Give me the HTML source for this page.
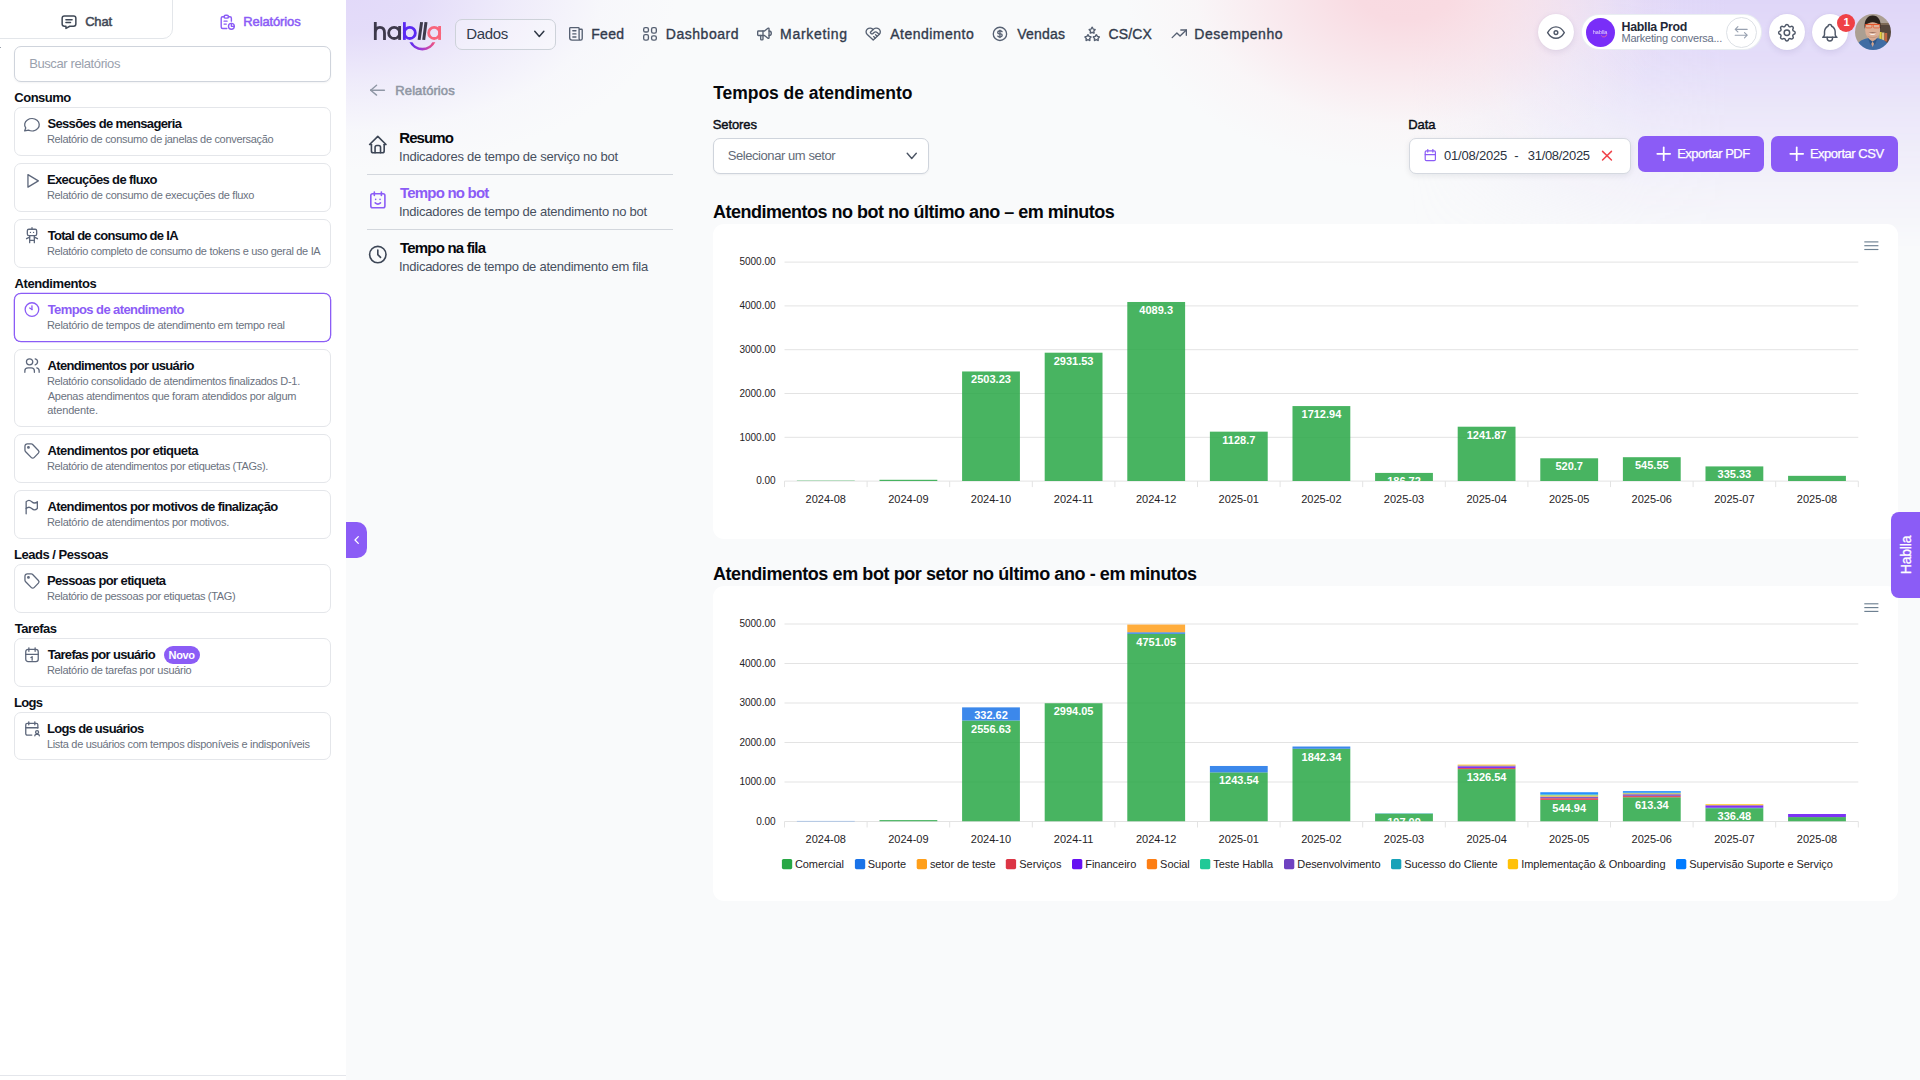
<!DOCTYPE html>
<html lang="pt-BR"><head><meta charset="utf-8"><title>Hablla - Tempos de atendimento</title>
<style>
*{box-sizing:border-box;margin:0;padding:0}
html,body{width:1920px;height:1080px;overflow:hidden}
body{font-family:"Liberation Sans",sans-serif;background:#f9fafb;position:relative;color:#111}
.b{position:absolute;display:block}
.t{position:absolute;white-space:nowrap;line-height:normal}
#bg{position:absolute;left:346px;top:0;width:1574px;height:1080px;overflow:hidden;background:#f9fafb}
#bg i{position:absolute;display:block;border-radius:50%}
#bg .l{left:-330px;top:-180px;width:660px;height:350px;background:radial-gradient(closest-side,rgba(226,217,249,1) 0%,rgba(227,219,249,.96) 22%,rgba(232,226,250,.6) 50%,rgba(240,237,252,.2) 78%,rgba(249,250,251,0) 100%)}
#bg .r{left:1064px;top:0;width:510px;height:250px;border-radius:0;background:linear-gradient(to right,rgba(223,214,248,0) 0%,rgba(223,214,248,.22) 14%,rgba(223,214,248,.62) 30%,rgba(223,214,248,.93) 46%,rgba(223,214,248,1) 62%);-webkit-mask-image:linear-gradient(to bottom,#000 0%,rgba(0,0,0,.8) 25%,rgba(0,0,0,.5) 46%,rgba(0,0,0,.2) 76%,transparent 100%);mask-image:linear-gradient(to bottom,#000 0%,rgba(0,0,0,.8) 25%,rgba(0,0,0,.5) 46%,rgba(0,0,0,.2) 76%,transparent 100%)}
#bg .p{left:779px;top:-190px;width:560px;height:360px;background:radial-gradient(closest-side,rgba(249,218,225,1) 0%,rgba(249,219,226,1) 17%,rgba(249,222,229,.64) 45%,rgba(250,230,235,.2) 75%,rgba(250,236,239,0) 100%)}
aside,header,nav,main{display:block;position:static}
#side{position:absolute;left:0;top:0;width:346px;height:1080px;background:#fff}
</style></head>
<body>
<div id="bg"><i class="l"></i><i class="r"></i><i class="p"></i></div>
<div id="side"></div>
<aside id="sidebar">
<div class="b " style="left:-1px;top:-1px;width:174px;height:40px;border:1px solid #e3e6ea;border-radius:0 0 10px 0;background:#fff"></div>
<svg class="b" style="left:59px;top:13px" width="20" height="19" fill="none" stroke="#3f4856" stroke-width="1.5" stroke-linecap="round" stroke-linejoin="round"><g transform="translate(0.87 0.01) scale(0.7611 0.7353)"><path d="M8 9h8" vector-effect="non-scaling-stroke"/><path d="M8 13h6" vector-effect="non-scaling-stroke"/><path d="M18 4a3 3 0 0 1 3 3v8a3 3 0 0 1 -3 3h-5l-5 3v-3h-2a3 3 0 0 1 -3 -3v-8a3 3 0 0 1 3 -3h12z" vector-effect="non-scaling-stroke"/></g></svg>
<div class="t " style="left:85.14px;top:13.80px;font-size:13px;color:#3f4856;letter-spacing:-0.168px;-webkit-text-stroke:0.5px #3f4856;">Chat</div>
<svg class="b" style="left:218px;top:12px" width="19" height="20" fill="none" stroke="#8b5cf6" stroke-width="1.4" stroke-linecap="round" stroke-linejoin="round"><g transform="translate(0.29 0.97) scale(0.7278 0.7421)"><path d="M8 5h-2a2 2 0 0 0 -2 2v12a2 2 0 0 0 2 2h5.697" vector-effect="non-scaling-stroke"/><path d="M18 14v4h4" vector-effect="non-scaling-stroke"/><path d="M18 11v-4a2 2 0 0 0 -2 -2h-2" vector-effect="non-scaling-stroke"/><path d="M8 5a2 2 0 0 1 2 -2h2a2 2 0 0 1 2 2v0a2 2 0 0 1 -2 2h-2a2 2 0 0 1 -2 -2z" vector-effect="non-scaling-stroke"/><path d="M14 18a4 4 0 1 0 8 0a4 4 0 1 0 -8 0" vector-effect="non-scaling-stroke"/><path d="M8 11h4" vector-effect="non-scaling-stroke"/><path d="M8 15h3" vector-effect="non-scaling-stroke"/></g></svg>
<div class="t " style="left:243.33px;top:13.80px;font-size:13px;color:#8b5cf6;letter-spacing:-0.132px;-webkit-text-stroke:0.5px #8b5cf6;">Relatórios</div>
<div class="b " style="left:14px;top:46px;width:317px;height:36px;border:1px solid #cfd4dc;border-radius:7px;background:#fff;box-shadow:0 1px 2px rgba(16,24,40,.05)"></div>
<div class="t " style="left:29.13px;top:55.60px;font-size:13px;color:#9aa1ad;letter-spacing:-0.388px;">Buscar relatórios</div>
<div class="t " style="left:14.27px;top:89.80px;font-size:13px;color:#0b0f17;font-weight:700;letter-spacing:-0.483px;">Consumo</div>
<div class="b " style="left:14px;top:107px;width:317px;height:49px;border:1px solid #e4e6ea;border-radius:7px;background:#fff"></div>
<svg class="b" style="left:22px;top:116px" width="20" height="18" fill="none" stroke="#5d677b" stroke-width="1.3" stroke-linecap="round" stroke-linejoin="round"><g transform="translate(0.22 -0.40) scale(0.8105 0.7677)"><path d="M3 20l1.3 -3.9c-2.324 -3.437 -1.426 -7.872 2.1 -10.374c3.526 -2.501 8.59 -2.296 11.845 .48c3.255 2.777 3.695 7.266 1.029 10.501c-2.666 3.235 -7.615 4.215 -11.574 2.293l-4.7 1" vector-effect="non-scaling-stroke"/></g></svg>
<div class="t " style="left:47.43px;top:116.00px;font-size:13px;color:#0b0f17;font-weight:700;letter-spacing:-0.646px;">Sessões de mensageria</div>
<div class="t " style="left:46.90px;top:133.00px;font-size:11px;color:#6b7280;letter-spacing:-0.315px;">Relatório de consumo de janelas de conversação</div>
<div class="b " style="left:14px;top:163px;width:317px;height:49px;border:1px solid #e4e6ea;border-radius:7px;background:#fff"></div>
<svg class="b" style="left:25px;top:172px" width="16" height="18" fill="none" stroke="#5d677b" stroke-width="1.3" stroke-linecap="round" stroke-linejoin="round"><g transform="translate(-2.65 -0.47) scale(0.8000 0.7813)"><path d="M7 4v16l13 -8z" vector-effect="non-scaling-stroke"/></g></svg>
<div class="t " style="left:46.93px;top:172.00px;font-size:13px;color:#0b0f17;font-weight:700;letter-spacing:-0.635px;">Execuções de fluxo</div>
<div class="t " style="left:46.90px;top:189.00px;font-size:11px;color:#6b7280;letter-spacing:-0.292px;">Relatório de consumo de execuções de fluxo</div>
<div class="b " style="left:14px;top:219px;width:317px;height:49px;border:1px solid #e4e6ea;border-radius:7px;background:#fff"></div>
<svg class="b" style="left:23px;top:225px" width="18" height="21" fill="none" stroke="#5d677b" stroke-width="1.3" stroke-linecap="round" stroke-linejoin="round"><g transform="translate(-0.34 1.07) scale(0.7786 0.7895)"><path d="M6 6a2 2 0 0 1 2 -2h8a2 2 0 0 1 2 2v4a2 2 0 0 1 -2 2h-8a2 2 0 0 1 -2 -2z" vector-effect="non-scaling-stroke"/><path d="M12 2v2" vector-effect="non-scaling-stroke"/><path d="M9 12v9" vector-effect="non-scaling-stroke"/><path d="M15 12v9" vector-effect="non-scaling-stroke"/><path d="M5 16l4 -2" vector-effect="non-scaling-stroke"/><path d="M15 14l4 2" vector-effect="non-scaling-stroke"/><path d="M9 18h6" vector-effect="non-scaling-stroke"/><path d="M10 8v.01" vector-effect="non-scaling-stroke"/><path d="M14 8v.01" vector-effect="non-scaling-stroke"/></g></svg>
<div class="t " style="left:47.65px;top:228.00px;font-size:13px;color:#0b0f17;font-weight:700;letter-spacing:-0.702px;">Total de consumo de IA</div>
<div class="t " style="left:46.90px;top:245.00px;font-size:11px;color:#6b7280;letter-spacing:-0.319px;">Relatório completo de consumo de tokens e uso geral de IA</div>
<div class="t " style="left:14.48px;top:276.00px;font-size:13px;color:#0b0f17;font-weight:700;letter-spacing:-0.401px;">Atendimentos</div>
<div class="b " style="left:14px;top:293px;width:317px;height:49px;border:1px solid #8b5cf6;border-radius:7px;background:#fff;box-shadow:0 0 0 .3px #8b5cf6"></div>
<svg class="b" style="left:22px;top:300px" width="20" height="19" fill="none" stroke="#8b5cf6" stroke-width="1.3" stroke-linecap="round" stroke-linejoin="round"><g transform="translate(0.88 0.49) scale(0.7556 0.7553)"><path d="M3 12a9 9 0 1 0 18 0a9 9 0 1 0 -18 0" vector-effect="non-scaling-stroke"/><path d="M12 12l-3 -2" vector-effect="non-scaling-stroke"/><path d="M12 7v5" vector-effect="non-scaling-stroke"/></g></svg>
<div class="t " style="left:47.65px;top:302.00px;font-size:13px;color:#8b5cf6;font-weight:700;letter-spacing:-0.583px;">Tempos de atendimento</div>
<div class="t " style="left:46.90px;top:319.00px;font-size:11px;color:#6b7280;letter-spacing:-0.269px;">Relatório de tempos de atendimento em tempo real</div>
<div class="b " style="left:14px;top:349px;width:317px;height:78px;border:1px solid #e4e6ea;border-radius:7px;background:#fff"></div>
<svg class="b" style="left:22px;top:356px" width="20" height="19" fill="none" stroke="#5d677b" stroke-width="1.3" stroke-linecap="round" stroke-linejoin="round"><g transform="translate(0.47 0.60) scale(0.7944 0.7500)"><path d="M5 7a4 4 0 1 0 8 0a4 4 0 1 0 -8 0" vector-effect="non-scaling-stroke"/><path d="M3 21v-2a4 4 0 0 1 4 -4h4a4 4 0 0 1 4 4v2" vector-effect="non-scaling-stroke"/><path d="M16 3.13a4 4 0 0 1 0 7.75" vector-effect="non-scaling-stroke"/><path d="M21 21v-2a4 4 0 0 0 -3 -3.85" vector-effect="non-scaling-stroke"/></g></svg>
<div class="t " style="left:47.48px;top:358.00px;font-size:13px;color:#0b0f17;font-weight:700;letter-spacing:-0.642px;">Atendimentos por usuário</div>
<div class="t " style="left:46.90px;top:375.00px;font-size:11px;color:#6b7280;letter-spacing:-0.297px;">Relatório consolidado de atendimentos finalizados D-1.</div>
<div class="t " style="left:47.78px;top:389.60px;font-size:11px;color:#6b7280;letter-spacing:-0.272px;">Apenas atendimentos que foram atendidos por algum</div>
<div class="t " style="left:47.33px;top:404.20px;font-size:11px;color:#6b7280;letter-spacing:-0.147px;">atendente.</div>
<div class="b " style="left:14px;top:434px;width:317px;height:49px;border:1px solid #e4e6ea;border-radius:7px;background:#fff"></div>
<svg class="b" style="left:22px;top:441px" width="20" height="20" fill="none" stroke="#5d677b" stroke-width="1.3" stroke-linecap="round" stroke-linejoin="round"><g transform="translate(0.62 0.47) scale(0.7777 0.7944)"><path d="M6.5 7.5a1 1 0 1 0 2 0a1 1 0 1 0 -2 0" vector-effect="non-scaling-stroke"/><path d="M3 6v5.172a2 2 0 0 0 .586 1.414l7.71 7.71a2.41 2.41 0 0 0 3.408 0l5.592 -5.592a2.41 2.41 0 0 0 0 -3.408l-7.71 -7.71a2 2 0 0 0 -1.414 -.586h-5.172a3 3 0 0 0 -3 3z" vector-effect="non-scaling-stroke"/></g></svg>
<div class="t " style="left:47.48px;top:443.00px;font-size:13px;color:#0b0f17;font-weight:700;letter-spacing:-0.572px;">Atendimentos por etiqueta</div>
<div class="t " style="left:46.90px;top:460.00px;font-size:11px;color:#6b7280;letter-spacing:-0.311px;">Relatório de atendimentos por etiquetas (TAGs).</div>
<div class="b " style="left:14px;top:490px;width:317px;height:49px;border:1px solid #e4e6ea;border-radius:7px;background:#fff"></div>
<svg class="b" style="left:23px;top:498px" width="17" height="19" fill="none" stroke="#5d677b" stroke-width="1.3" stroke-linecap="round" stroke-linejoin="round"><g transform="translate(-0.85 -0.05) scale(0.8000 0.7573)"><path d="M5 5a5 5 0 0 1 7 0a5 5 0 0 0 7 0v9a5 5 0 0 1 -7 0a5 5 0 0 0 -7 0v-9z" vector-effect="non-scaling-stroke"/><path d="M5 21v-7" vector-effect="non-scaling-stroke"/></g></svg>
<div class="t " style="left:47.48px;top:499.00px;font-size:13px;color:#0b0f17;font-weight:700;letter-spacing:-0.600px;">Atendimentos por motivos de finalização</div>
<div class="t " style="left:46.90px;top:516.00px;font-size:11px;color:#6b7280;letter-spacing:-0.245px;">Relatório de atendimentos por motivos.</div>
<div class="t " style="left:13.93px;top:547.30px;font-size:13px;color:#0b0f17;font-weight:700;letter-spacing:-0.469px;">Leads / Pessoas</div>
<div class="b " style="left:14px;top:564px;width:317px;height:49px;border:1px solid #e4e6ea;border-radius:7px;background:#fff"></div>
<svg class="b" style="left:22px;top:571px" width="20" height="20" fill="none" stroke="#5d677b" stroke-width="1.3" stroke-linecap="round" stroke-linejoin="round"><g transform="translate(0.62 0.47) scale(0.7777 0.7944)"><path d="M6.5 7.5a1 1 0 1 0 2 0a1 1 0 1 0 -2 0" vector-effect="non-scaling-stroke"/><path d="M3 6v5.172a2 2 0 0 0 .586 1.414l7.71 7.71a2.41 2.41 0 0 0 3.408 0l5.592 -5.592a2.41 2.41 0 0 0 0 -3.408l-7.71 -7.71a2 2 0 0 0 -1.414 -.586h-5.172a3 3 0 0 0 -3 3z" vector-effect="non-scaling-stroke"/></g></svg>
<div class="t " style="left:46.93px;top:573.00px;font-size:13px;color:#0b0f17;font-weight:700;letter-spacing:-0.610px;">Pessoas por etiqueta</div>
<div class="t " style="left:46.90px;top:590.00px;font-size:11px;color:#6b7280;letter-spacing:-0.346px;">Relatório de pessoas por etiquetas (TAG)</div>
<div class="t " style="left:14.65px;top:621.00px;font-size:13px;color:#0b0f17;font-weight:700;letter-spacing:-0.478px;">Tarefas</div>
<div class="b " style="left:14px;top:638px;width:317px;height:49px;border:1px solid #e4e6ea;border-radius:7px;background:#fff"></div>
<svg class="b" style="left:23px;top:645px" width="18" height="20" fill="none" stroke="#5d677b" stroke-width="1.3" stroke-linecap="round" stroke-linejoin="round"><g transform="translate(-0.38 0.57) scale(0.7812 0.7611)"><path d="M4 8a3 3 0 0 1 3 -3h10a3 3 0 0 1 3 3v10a3 3 0 0 1 -3 3h-10a3 3 0 0 1 -3 -3z" vector-effect="non-scaling-stroke"/><path d="M8 3v4.5" vector-effect="non-scaling-stroke"/><path d="M16 3v4.5" vector-effect="non-scaling-stroke"/><path d="M4 11.5h16" vector-effect="non-scaling-stroke"/><path d="M10.6 15.6l1.6 -1v4.6" vector-effect="non-scaling-stroke"/></g></svg>
<div class="t " style="left:47.65px;top:647.00px;font-size:13px;color:#0b0f17;font-weight:700;letter-spacing:-0.684px;">Tarefas por usuário</div>
<div class="t " style="left:46.90px;top:664.00px;font-size:11px;color:#6b7280;letter-spacing:-0.301px;">Relatório de tarefas por usuário</div>
<div class="b " style="left:164px;top:646.2px;width:36px;height:17.6px;background:#8b5cf6;border-radius:9px"></div>
<div class="t " style="left:168.56px;top:648.60px;font-size:11px;color:#fff;font-weight:700;letter-spacing:-0.345px;">Novo</div>
<div class="t " style="left:13.93px;top:695.00px;font-size:13px;color:#0b0f17;font-weight:700;letter-spacing:-0.650px;">Logs</div>
<div class="b " style="left:14px;top:712px;width:317px;height:48px;border:1px solid #e4e6ea;border-radius:7px;background:#fff"></div>
<svg class="b" style="left:23px;top:719px" width="19" height="20" fill="none" stroke="#5d677b" stroke-width="1.3" stroke-linecap="round" stroke-linejoin="round"><g transform="translate(-0.27 0.64) scale(0.7556 0.7368)"><path d="M12 21h-6a2 2 0 0 1 -2 -2v-12a2 2 0 0 1 2 -2h12a2 2 0 0 1 2 2v4.5" vector-effect="non-scaling-stroke"/><path d="M16 3v4" vector-effect="non-scaling-stroke"/><path d="M8 3v4" vector-effect="non-scaling-stroke"/><path d="M4 11h16" vector-effect="non-scaling-stroke"/><path d="M17 17a2 2 0 1 0 4 0a2 2 0 1 0 -4 0" vector-effect="non-scaling-stroke"/><path d="M22 22a2 2 0 0 0 -2 -2h-2a2 2 0 0 0 -2 2" vector-effect="non-scaling-stroke"/></g></svg>
<div class="t " style="left:46.93px;top:721.00px;font-size:13px;color:#0b0f17;font-weight:700;letter-spacing:-0.689px;">Logs de usuários</div>
<div class="t " style="left:46.90px;top:738.00px;font-size:11px;color:#6b7280;letter-spacing:-0.310px;">Lista de usuários com tempos disponíveis e indisponíveis</div>
<div class="b " style="left:0px;top:1075px;width:346px;height:1px;background:#e4e6eb"></div>
<div class="b " style="left:0px;top:47px;width:1px;height:1px;background:#989fac"></div>
</aside>
<div class="b " style="left:346px;top:522px;width:21px;height:36px;background:#8b5cf6;border-radius:0 10px 10px 0"></div>
<svg class="b" style="left:350px;top:533px" width="14" height="14" viewBox="0 0 14 14" fill="none" stroke="#fff" stroke-width="1.3" stroke-linecap="round" stroke-linejoin="round"><path d="M8.3 3.6L5 7l3.3 3.4"/></svg>
<header id="topbar">
<svg class="b" style="left:366px;top:12px" width="84" height="46" viewBox="366 12 84 46" fill="none" stroke-linecap="butt">
<defs><linearGradient id="lg" x1="410" y1="0" x2="435" y2="0" gradientUnits="userSpaceOnUse"><stop offset="0" stop-color="#5b2cf0"/><stop offset=".5" stop-color="#a53bd0"/><stop offset="1" stop-color="#f2557c"/></linearGradient></defs>
<g stroke="#3d394b" stroke-width="2.8">
<path d="M375.3 22.1V39.9M375.3 33C375.3 29 377.3 27.4 379.9 27.4C382.7 27.4 384.5 29.2 384.5 33V39.9"/>
<circle cx="394.2" cy="32.95" r="5.55"/><path d="M399.6 26V39.9"/>
<path d="M421.6 22.1L419.1 39.9M426 22.1L423.7 39.9" stroke-width="3"/>
</g>
<g stroke="#5a2af3" stroke-width="2.8"><path d="M404.4 22.1V39.9"/><circle cx="409.8" cy="32.95" r="5.55"/></g>
<g stroke="#f8657c" stroke-width="2.8"><circle cx="434.2" cy="32.95" r="5.55"/><path d="M439.6 26V39.9"/></g>
<clipPath id="smc"><rect x="400" y="42.2" width="50" height="12"/></clipPath><path d="M410.2 40.4A12.9 12.9 0 0 0 434.6 40.4" stroke="url(#lg)" stroke-width="2.7" clip-path="url(#smc)"/>
</svg>
<div class="b " style="left:455px;top:19px;width:101px;height:31px;border:1px solid #cdd2d9;border-radius:7px;background:rgba(255,255,255,.28)"></div>
<div class="t " style="left:466.27px;top:25.40px;font-size:15px;color:#313a4b;letter-spacing:-0.322px;">Dados</div>
<svg class="b" style="left:532px;top:28px" width="15" height="12" fill="none" stroke="#2f3745" stroke-width="1.5" stroke-linecap="round" stroke-linejoin="round"><g transform="translate(-1.80 -4.30) scale(0.7583 0.8500)"><path d="M6 9l6 6l6 -6" vector-effect="non-scaling-stroke"/></g></svg>
<svg class="b" style="left:567px;top:25px" width="18" height="18" fill="none" stroke="#566072" stroke-width="1.35" stroke-linecap="round" stroke-linejoin="round"><g transform="translate(-0.46 -0.44) scale(0.7844 0.7781)"><path d="M16 6h3a1 1 0 0 1 1 1v11a2 2 0 0 1 -4 0v-13a1 1 0 0 0 -1 -1h-10a1 1 0 0 0 -1 1v12a3 3 0 0 0 3 3h11" vector-effect="non-scaling-stroke"/><path d="M8 8l4 0" vector-effect="non-scaling-stroke"/><path d="M8 12l4 0" vector-effect="non-scaling-stroke"/><path d="M8 16l4 0" vector-effect="non-scaling-stroke"/></g></svg>
<div class="t " style="left:591.15px;top:25.80px;font-size:14px;color:#323b4c;letter-spacing:0.347px;-webkit-text-stroke:0.35px #323b4c;">Feed</div>
<svg class="b" style="left:641px;top:25px" width="18" height="18" fill="none" stroke="#566072" stroke-width="1.35" stroke-linecap="round" stroke-linejoin="round"><g transform="translate(-0.49 -0.44) scale(0.7906 0.7781)"><path d="M6 4h2a2 2 0 0 1 2 2v1.5a2 2 0 0 1 -2 2h-2a2 2 0 0 1 -2 -2v-1.5a2 2 0 0 1 2 -2z" vector-effect="non-scaling-stroke"/><path d="M6 13h2a2 2 0 0 1 2 2v3a2 2 0 0 1 -2 2h-2a2 2 0 0 1 -2 -2v-3a2 2 0 0 1 2 -2z" vector-effect="non-scaling-stroke"/><path d="M16 4h2a2 2 0 0 1 2 2v3a2 2 0 0 1 -2 2h-2a2 2 0 0 1 -2 -2v-3a2 2 0 0 1 2 -2z" vector-effect="non-scaling-stroke"/><path d="M16 14.5h2a2 2 0 0 1 2 2v1.5a2 2 0 0 1 -2 2h-2a2 2 0 0 1 -2 -2v-1.5a2 2 0 0 1 2 -2z" vector-effect="non-scaling-stroke"/></g></svg>
<div class="t " style="left:665.85px;top:25.80px;font-size:14px;color:#323b4c;letter-spacing:0.520px;-webkit-text-stroke:0.35px #323b4c;">Dashboard</div>
<svg class="b" style="left:755px;top:25px" width="19" height="18" fill="none" stroke="#566072" stroke-width="1.35" stroke-linecap="round" stroke-linejoin="round"><g transform="translate(0.40 0.09) scale(0.7583 0.7416)"><path d="M18 8a3 3 0 0 1 0 6" vector-effect="non-scaling-stroke"/><path d="M10 8v11a1 1 0 0 1 -1 1h-1a1 1 0 0 1 -1 -1v-5" vector-effect="non-scaling-stroke"/><path d="M12 8h0l4.524 -3.77a.9 .9 0 0 1 1.476 .692v12.156a.9 .9 0 0 1 -1.476 .692l-4.524 -3.77h-8a1 1 0 0 1 -1 -1v-4a1 1 0 0 1 1 -1h8" vector-effect="non-scaling-stroke"/></g></svg>
<div class="t " style="left:780.05px;top:25.80px;font-size:14px;color:#323b4c;letter-spacing:0.698px;-webkit-text-stroke:0.35px #323b4c;">Marketing</div>
<svg class="b" style="left:863px;top:25px" width="20" height="18" fill="none" stroke="#566072" stroke-width="1.35" stroke-linecap="round" stroke-linejoin="round"><g transform="translate(0.71 0.12) scale(0.7913 0.7401)"><path d="M19.5 12.572l-7.5 7.428l-7.5 -7.428a5 5 0 1 1 7.5 -6.566a5 5 0 1 1 7.5 6.572" vector-effect="non-scaling-stroke"/><path d="M12 6l-3.293 3.293a1 1 0 0 0 0 1.414l.543 .543c.69 .69 1.81 .69 2.5 0l1 -1a3.182 3.182 0 0 1 4.5 0l2.25 2.25" vector-effect="non-scaling-stroke"/><path d="M12.5 15.5l2 2" vector-effect="non-scaling-stroke"/><path d="M15 13l2 2" vector-effect="non-scaling-stroke"/></g></svg>
<div class="t " style="left:890.17px;top:25.80px;font-size:14px;color:#323b4c;letter-spacing:0.501px;-webkit-text-stroke:0.35px #323b4c;">Atendimento</div>
<svg class="b" style="left:990px;top:24px" width="20" height="20" fill="none" stroke="#566072" stroke-width="1.35" stroke-linecap="round" stroke-linejoin="round"><g transform="translate(1.05 1.07) scale(0.7417 0.7359)"><path d="M3 12a9 9 0 1 0 18 0a9 9 0 1 0 -18 0" vector-effect="non-scaling-stroke"/><path d="M14.8 9a2 2 0 0 0 -1.8 -1h-2a2 2 0 1 0 0 4h2a2 2 0 1 1 0 4h-2a2 2 0 0 1 -1.8 -1" vector-effect="non-scaling-stroke"/><path d="M12 7v10" vector-effect="non-scaling-stroke"/></g></svg>
<div class="t " style="left:1017.34px;top:25.80px;font-size:14px;color:#323b4c;letter-spacing:0.177px;-webkit-text-stroke:0.35px #323b4c;">Vendas</div>
<svg class="b" style="left:1082px;top:24px" width="20" height="20" fill="none" stroke="#566072" stroke-width="1.35" stroke-linecap="round" stroke-linejoin="round"><g transform="translate(1.54 1.07) scale(0.7175 0.7361)"><path d="M17.8 19.817l-2.172 1.138a.392 .392 0 0 1 -.568 -.41l.415 -2.411l-1.757 -1.707a.389 .389 0 0 1 .217 -.665l2.428 -.352l1.086 -2.193a.392 .392 0 0 1 .702 0l1.086 2.193l2.428 .352a.39 .39 0 0 1 .217 .665l-1.757 1.707l.414 2.41a.39 .39 0 0 1 -.567 .411l-2.172 -1.138z" vector-effect="non-scaling-stroke"/><path d="M6.2 19.817l-2.172 1.138a.392 .392 0 0 1 -.568 -.41l.415 -2.411l-1.757 -1.707a.389 .389 0 0 1 .217 -.665l2.428 -.352l1.086 -2.193a.392 .392 0 0 1 .702 0l1.086 2.193l2.428 .352a.39 .39 0 0 1 .217 .665l-1.757 1.707l.414 2.41a.39 .39 0 0 1 -.567 .411l-2.172 -1.138z" vector-effect="non-scaling-stroke"/><path d="M12 9.817l-2.172 1.138a.392 .392 0 0 1 -.568 -.41l.415 -2.411l-1.757 -1.707a.389 .389 0 0 1 .217 -.665l2.428 -.352l1.086 -2.193a.392 .392 0 0 1 .702 0l1.086 2.193l2.428 .352a.39 .39 0 0 1 .217 .665l-1.757 1.707l.414 2.41a.39 .39 0 0 1 -.567 .411l-2.172 -1.138z" vector-effect="non-scaling-stroke"/></g></svg>
<div class="t " style="left:1108.49px;top:25.80px;font-size:14px;color:#323b4c;letter-spacing:0.155px;-webkit-text-stroke:0.35px #323b4c;">CS/CX</div>
<svg class="b" style="left:1169px;top:27px" width="20" height="14" fill="none" stroke="#566072" stroke-width="1.35" stroke-linecap="round" stroke-linejoin="round"><g transform="translate(0.82 -2.38) scale(0.7861 0.7650)"><path d="M3 17l6 -6l4 4l8 -8" vector-effect="non-scaling-stroke"/><path d="M14 7l7 0l0 7" vector-effect="non-scaling-stroke"/></g></svg>
<div class="t " style="left:1194.25px;top:25.80px;font-size:14px;color:#323b4c;letter-spacing:0.562px;-webkit-text-stroke:0.35px #323b4c;">Desempenho</div>
<div class="b " style="left:1538px;top:14px;width:36px;height:36px;background:#fff;border-radius:50%;box-shadow:0 2px 6px rgba(60,40,110,.10),0 0 1px rgba(60,40,110,.10)"></div>
<svg class="b" style="left:1544px;top:24px" width="23" height="17" fill="none" stroke="#4f5868" stroke-width="1.4" stroke-linecap="round" stroke-linejoin="round"><g transform="translate(0.82 -2.80) scale(0.9278 0.9500)"><path d="M10 12a2 2 0 1 0 4 0a2 2 0 0 0 -4 0" vector-effect="non-scaling-stroke"/><path d="M21 12c-2.4 4 -5.4 6 -9 6c-3.6 0 -6.6 -2 -9 -6c2.4 -4 5.4 -6 9 -6c3.6 0 6.6 2 9 6" vector-effect="non-scaling-stroke"/></g></svg>
<div class="b " style="left:1581px;top:14px;width:181px;height:36px;background:#fff;border-radius:18px;border:1px solid rgba(226,232,236,.75)"></div>
<div class="b " style="left:1586px;top:18px;width:29px;height:29px;background:#792ef8;border-radius:50%"></div>
<svg class="b" style="left:1591px;top:27px" width="20" height="12" viewBox="0 0 20 12" fill="none"><text x="1.8" y="7.3" font-family="Liberation Sans, sans-serif" font-size="6" fill="#fff" opacity=".82" textLength="14.6" lengthAdjust="spacingAndGlyphs">hablla</text><path d="M10.2 8.4a3 3 0 0 0 5.6 -1.2" stroke="#ff6b9a" stroke-width=".8" opacity=".9"/></svg>
<div class="t " style="left:1621.57px;top:19.70px;font-size:12.4px;color:#1f2838;font-weight:700;letter-spacing:-0.316px;">Hablla Prod</div>
<div class="t " style="left:1621.50px;top:31.80px;font-size:11px;color:#667085;letter-spacing:-0.222px;">Marketing conversa...</div>
<div class="b " style="left:1726px;top:17px;width:31px;height:31px;border:1px solid #dde1e6;border-radius:50%;background:#fff"></div>
<svg class="b" style="left:1730px;top:22px" width="24" height="20" viewBox="1730 22 24 20" fill="none" stroke="#98a1b0" stroke-width="1.15" stroke-linecap="round" stroke-linejoin="round"><path d="M1747.2 29.3H1735.2M1737.9 26.7L1735.2 29.3L1737.9 31.9"/><path d="M1735.2 35.2H1747.2M1744.5 32.6L1747.2 35.2L1744.5 37.8"/></svg>
<div class="b " style="left:1769px;top:14px;width:36px;height:36px;background:#fff;border-radius:50%;box-shadow:0 2px 6px rgba(60,40,110,.10),0 0 1px rgba(60,40,110,.10)"></div>
<svg class="b" style="left:1775px;top:21px" width="23" height="23" fill="none" stroke="#4f5868" stroke-width="1.45" stroke-linecap="round" stroke-linejoin="round"><g transform="translate(0.87 0.67) scale(0.9194 0.9194)"><path d="M10.325 4.317c.426 -1.756 2.924 -1.756 3.35 0a1.724 1.724 0 0 0 2.573 1.066c1.543 -.94 3.31 .826 2.37 2.37a1.724 1.724 0 0 0 1.065 2.572c1.756 .426 1.756 2.924 0 3.35a1.724 1.724 0 0 0 -1.066 2.573c.94 1.543 -.826 3.31 -2.37 2.37a1.724 1.724 0 0 0 -2.572 1.065c-.426 1.756 -2.924 1.756 -3.35 0a1.724 1.724 0 0 0 -2.573 -1.066c-1.543 .94 -3.31 -.826 -2.37 -2.37a1.724 1.724 0 0 0 -1.065 -2.572c-1.756 -.426 -1.756 -2.924 0 -3.35a1.724 1.724 0 0 0 1.066 -2.573c-.94 -1.543 .826 -3.31 2.37 -2.37c1 .608 2.296 .07 2.572 -1.065z" vector-effect="non-scaling-stroke"/><path d="M9 12a3 3 0 1 0 6 0a3 3 0 0 0 -6 0" vector-effect="non-scaling-stroke"/></g></svg>
<div class="b " style="left:1812px;top:14px;width:36px;height:36px;background:#fff;border-radius:50%;box-shadow:0 2px 6px rgba(60,40,110,.10),0 0 1px rgba(60,40,110,.10)"></div>
<svg class="b" style="left:1820px;top:21px" width="20" height="23" fill="none" stroke="#4f5868" stroke-width="1.45" stroke-linecap="round" stroke-linejoin="round"><g transform="translate(-0.84 0.67) scale(0.8906 0.9194)"><path d="M10 5a2 2 0 1 1 4 0a7 7 0 0 1 4 6v3a4 4 0 0 0 2 3h-16a4 4 0 0 0 2 -3v-3a7 7 0 0 1 4 -6" vector-effect="non-scaling-stroke"/><path d="M9 17v1a3 3 0 0 0 6 0v-1" vector-effect="non-scaling-stroke"/></g></svg>
<div class="b " style="left:1837px;top:13.8px;width:18px;height:18px;background:#ef4146;border-radius:50%"></div>
<div class="t " style="left:1843.41px;top:16.00px;font-size:11px;color:#fff;font-weight:700;">1</div>
<svg class="b" style="left:1855px;top:14px" width="36" height="36" viewBox="0 0 36 36">
<defs><clipPath id="av"><circle cx="18" cy="18" r="18"/></clipPath>
<filter id="avb" x="-10%" y="-10%" width="120%" height="120%"><feGaussianBlur stdDeviation=".6"/></filter></defs>
<g clip-path="url(#av)"><g filter="url(#avb)">
<rect width="36" height="36" fill="#ab9f92"/>
<rect x="25" y="9" width="12" height="28" fill="#55473b"/>
<rect x="24.5" y="18" width="2.2" height="9.5" fill="#e3d23c"/><rect x="27" y="18.5" width="2.4" height="9" fill="#d9c48a"/><rect x="29.6" y="19" width="2.6" height="8.5" fill="#c2633f"/><rect x="25" y="9" width="11" height="2" fill="#7d6a55"/>
<path d="M0 36C1.5 28 7 25.2 12.5 24.2L23 24.2C28.5 25.2 33.5 28 35.5 36Z" fill="#3f6ca3"/>
<path d="M13.8 24L17.6 33L21.6 24Z" fill="#d2a48c"/>
<path d="M13 24.4L15.5 31L17.6 27.5Z M22.4 24.4L19.8 31L17.6 27.5Z" fill="#2f5788"/>
<ellipse cx="17.6" cy="16.4" rx="7.4" ry="9.4" fill="#dcae95"/>
<path d="M9.8 15C8.6 6.2 12.6 1.6 17.6 1.6C23.2 1.6 26.6 6.2 25.4 15C24.8 11 23 8.6 17.6 8.2C12.2 8.6 10.4 11 9.8 15Z" fill="#2a211d"/>
<rect x="10.6" y="10.3" width="6.3" height="3.6" rx="1.2" fill="#dfb39b" stroke="#e5562c" stroke-width=".75"/>
<rect x="18.4" y="10.3" width="6.3" height="3.6" rx="1.2" fill="#dfb39b" stroke="#e5562c" stroke-width=".75"/>
<rect x="10.2" y="9.9" width="14.8" height="1" rx=".5" fill="#e5562c"/>
<path d="M14.2 19.6C16 21.6 19.2 21.6 21 19.6C19.2 20.2 16 20.2 14.2 19.6Z" fill="#f7f0ec"/>
<path d="M13.4 18.7C15.6 17.7 19.6 17.7 21.8 18.7C19.6 18.9 15.6 18.9 13.4 18.7Z" fill="#8a5f50"/>
<path d="M12.2 21.5C13.6 25.2 21.6 25.2 23 21.5C21.6 23.4 13.6 23.4 12.2 21.5Z" fill="#b98871" opacity=".6"/>
</g></g></svg>
</header>
<nav id="subnav">
<svg class="b" style="left:368px;top:82px" width="20" height="16" fill="none" stroke="#8f97a5" stroke-width="1.4" stroke-linecap="round" stroke-linejoin="round"><g transform="translate(-2.19 -1.60) scale(0.9786 0.8167)"><path d="M5 12l14 0" vector-effect="non-scaling-stroke"/><path d="M5 12l6 6" vector-effect="non-scaling-stroke"/><path d="M5 12l6 -6" vector-effect="non-scaling-stroke"/></g></svg>
<div class="t " style="left:395.33px;top:82.80px;font-size:13px;color:#9097a4;letter-spacing:0.090px;-webkit-text-stroke:0.55px #9097a4;">Relatórios</div>
<svg class="b" style="left:366px;top:133px" width="23" height="23" fill="none" stroke="#3d4656" stroke-width="1.6" stroke-linecap="round" stroke-linejoin="round"><g transform="translate(0.87 0.68) scale(0.9111 0.9056)"><path d="M5 12l-2 0l9 -9l9 9l-2 0" vector-effect="non-scaling-stroke"/><path d="M5 12v7a2 2 0 0 0 2 2h10a2 2 0 0 0 2 -2v-7" vector-effect="non-scaling-stroke"/><path d="M9 21v-6a2 2 0 0 1 2 -2h2a2 2 0 0 1 2 2v6" vector-effect="non-scaling-stroke"/></g></svg>
<div class="t " style="left:399.20px;top:128.70px;font-size:15px;color:#05070b;font-weight:700;letter-spacing:-0.878px;">Resumo</div>
<div class="t " style="left:399.00px;top:148.60px;font-size:13px;color:#47505f;letter-spacing:-0.231px;">Indicadores de tempo de serviço no bot</div>
<div class="b " style="left:367px;top:174px;width:306px;height:1px;background:#d3d7dd"></div>
<svg class="b" style="left:368px;top:189px" width="20" height="22" fill="none" stroke="#8b5cf6" stroke-width="1.6" stroke-linecap="round" stroke-linejoin="round"><g transform="translate(-0.72 0.38) scale(0.8812 0.8722)"><path d="M4 7a2 2 0 0 1 2 -2h12a2 2 0 0 1 2 2v12a2 2 0 0 1 -2 2h-12a2 2 0 0 1 -2 -2z" vector-effect="non-scaling-stroke"/><path d="M16 3v4" vector-effect="non-scaling-stroke"/><path d="M8 3v4" vector-effect="non-scaling-stroke"/><path d="M9.5 11.5v.01" vector-effect="non-scaling-stroke"/><path d="M14.5 11.5v.01" vector-effect="non-scaling-stroke"/><path d="M9 15.5c1.7 1.6 4.3 1.6 6 0" vector-effect="non-scaling-stroke"/></g></svg>
<div class="t " style="left:400.03px;top:184.00px;font-size:15px;color:#8b5cf6;font-weight:700;letter-spacing:-0.800px;">Tempo no bot</div>
<div class="t " style="left:399.00px;top:203.90px;font-size:13px;color:#47505f;letter-spacing:-0.239px;">Indicadores de tempo de atendimento no bot</div>
<div class="b " style="left:367px;top:229px;width:306px;height:1px;background:#d3d7dd"></div>
<svg class="b" style="left:366px;top:243px" width="23" height="23" fill="none" stroke="#3d4656" stroke-width="1.6" stroke-linecap="round" stroke-linejoin="round"><g transform="translate(0.87 0.66) scale(0.9111 0.9111)"><path d="M3 12a9 9 0 1 0 18 0a9 9 0 0 0 -18 0" vector-effect="non-scaling-stroke"/><path d="M12 7v5l3 3" vector-effect="non-scaling-stroke"/></g></svg>
<div class="t " style="left:400.03px;top:239.00px;font-size:15px;color:#05070b;font-weight:700;letter-spacing:-0.801px;">Tempo na fila</div>
<div class="t " style="left:399.00px;top:258.90px;font-size:13px;color:#47505f;letter-spacing:-0.261px;">Indicadores de tempo de atendimento em fila</div>
</nav>
<main id="content">
<div class="t " style="left:713.20px;top:82.70px;font-size:17.5px;color:#05070b;font-weight:700;letter-spacing:-0.040px;">Tempos de atendimento</div>
<div class="t " style="left:712.71px;top:117.40px;font-size:13px;color:#0b0f17;letter-spacing:-0.090px;-webkit-text-stroke:0.45px #0b0f17;">Setores</div>
<div class="b " style="left:713px;top:138px;width:216px;height:36px;border:1px solid #cfd4dc;border-radius:7px;background:#fff;box-shadow:0 1px 2px rgba(16,24,40,.05)"></div>
<div class="t " style="left:727.71px;top:147.80px;font-size:13px;color:#636b78;letter-spacing:-0.428px;">Selecionar um setor</div>
<svg class="b" style="left:904px;top:150px" width="15" height="12" fill="none" stroke="#4b5463" stroke-width="1.4" stroke-linecap="round" stroke-linejoin="round"><g transform="translate(-1.35 -4.50) scale(0.7583 0.8667)"><path d="M6 9l6 6l6 -6" vector-effect="non-scaling-stroke"/></g></svg>
<div class="t " style="left:1408.13px;top:117.20px;font-size:13px;color:#0b0f17;letter-spacing:-0.031px;-webkit-text-stroke:0.45px #0b0f17;">Data</div>
<div class="b " style="left:1409px;top:138px;width:222px;height:36px;border:1px solid #d5d9e0;border-radius:7px;background:#fff;box-shadow:0 2px 6px rgba(16,24,40,.08)"></div>
<svg class="b" style="left:1422px;top:147px" width="16" height="17" fill="none" stroke="#8b5cf6" stroke-width="1.2" stroke-linecap="round" stroke-linejoin="round"><g transform="translate(0.65 0.75) scale(0.6375 0.6167)"><path d="M4 7a2 2 0 0 1 2 -2h12a2 2 0 0 1 2 2v12a2 2 0 0 1 -2 2h-12a2 2 0 0 1 -2 -2v-12z" vector-effect="non-scaling-stroke"/><path d="M16 3v4" vector-effect="non-scaling-stroke"/><path d="M8 3v4" vector-effect="non-scaling-stroke"/><path d="M4 11h16" vector-effect="non-scaling-stroke"/></g></svg>
<div class="t " style="left:1444.09px;top:147.90px;font-size:13px;color:#2b3340;letter-spacing:-0.212px;">01/08/2025</div>
<div class="t " style="left:1514.32px;top:147.90px;font-size:13px;color:#2b3340;">-</div>
<div class="t " style="left:1527.80px;top:147.90px;font-size:13px;color:#2b3340;letter-spacing:-0.314px;">31/08/2025</div>
<svg class="b" style="left:1599px;top:148px" width="16" height="15" fill="none" stroke="#f0434a" stroke-width="1.5" stroke-linecap="round" stroke-linejoin="round"><g transform="translate(-0.90 -1.00) scale(0.7417 0.7250)"><path d="M18 6l-12 12" vector-effect="non-scaling-stroke"/><path d="M6 6l12 12" vector-effect="non-scaling-stroke"/></g></svg>
<div class="b " style="left:1638px;top:136px;width:126px;height:36px;background:#8b5cf6;border-radius:7px"></div>
<svg class="b" style="left:1654px;top:144px" width="19" height="20" fill="none" stroke="#fff" stroke-width="1.75" stroke-linecap="round" stroke-linejoin="round"><g transform="translate(-1.31 -1.21) scale(0.9179 0.9179)"><path d="M12 5l0 14" vector-effect="non-scaling-stroke"/><path d="M5 12l14 0" vector-effect="non-scaling-stroke"/></g></svg>
<div class="t " style="left:1677.13px;top:146.30px;font-size:13px;color:#fff;letter-spacing:-0.523px;-webkit-text-stroke:0.25px #fff;">Exportar PDF</div>
<div class="b " style="left:1771px;top:136px;width:127px;height:36px;background:#8b5cf6;border-radius:7px"></div>
<svg class="b" style="left:1787px;top:144px" width="19" height="20" fill="none" stroke="#fff" stroke-width="1.75" stroke-linecap="round" stroke-linejoin="round"><g transform="translate(-1.31 -1.21) scale(0.9179 0.9179)"><path d="M12 5l0 14" vector-effect="non-scaling-stroke"/><path d="M5 12l14 0" vector-effect="non-scaling-stroke"/></g></svg>
<div class="t " style="left:1809.93px;top:146.30px;font-size:13px;color:#fff;letter-spacing:-0.486px;-webkit-text-stroke:0.25px #fff;">Exportar CSV</div>
<div class="t " style="left:712.95px;top:202.00px;font-size:18px;color:#05070b;font-weight:700;letter-spacing:-0.493px;">Atendimentos no bot no último ano – em minutos</div>
<div class="t " style="left:712.95px;top:564.20px;font-size:18px;color:#05070b;font-weight:700;letter-spacing:-0.415px;">Atendimentos em bot por setor no último ano - em minutos</div>
<div class="b " style="left:1891px;top:511.5px;width:30px;height:86.5px;background:#8b5cf6;border-radius:8px 0 0 8px;z-index:5"></div>
<div class="t" style="left:1906.3px;top:554.8px;font-size:14px;color:#fff;z-index:6;transform:translate(-50%,-50%) rotate(-90deg);-webkit-text-stroke:.3px #fff;letter-spacing:-.2px">Hablla</div>
<div class="b " style="left:713px;top:224px;width:1185px;height:315px;background:#fff;border-radius:11px"></div>
<svg class="b" style="left:713px;top:224px" width="1185" height="315" viewBox="713 224 1185 315"><line x1="784.5" x2="1858.3" y1="481.10" y2="481.10" stroke="#e3e3e3" stroke-width="1"/><text x="775.6" y="484.30" text-anchor="end" font-size="10" fill="#1f2326" font-family="Liberation Sans, sans-serif">0.00</text><line x1="784.5" x2="1858.3" y1="437.30" y2="437.30" stroke="#e3e3e3" stroke-width="1"/><text x="775.6" y="440.50" text-anchor="end" font-size="10" fill="#1f2326" font-family="Liberation Sans, sans-serif">1000.00</text><line x1="784.5" x2="1858.3" y1="393.50" y2="393.50" stroke="#e3e3e3" stroke-width="1"/><text x="775.6" y="396.70" text-anchor="end" font-size="10" fill="#1f2326" font-family="Liberation Sans, sans-serif">2000.00</text><line x1="784.5" x2="1858.3" y1="349.70" y2="349.70" stroke="#e3e3e3" stroke-width="1"/><text x="775.6" y="352.90" text-anchor="end" font-size="10" fill="#1f2326" font-family="Liberation Sans, sans-serif">3000.00</text><line x1="784.5" x2="1858.3" y1="305.90" y2="305.90" stroke="#e3e3e3" stroke-width="1"/><text x="775.6" y="309.10" text-anchor="end" font-size="10" fill="#1f2326" font-family="Liberation Sans, sans-serif">4000.00</text><line x1="784.5" x2="1858.3" y1="262.10" y2="262.10" stroke="#e3e3e3" stroke-width="1"/><text x="775.6" y="265.30" text-anchor="end" font-size="10" fill="#1f2326" font-family="Liberation Sans, sans-serif">5000.00</text><line x1="784.50" x2="784.50" y1="481.10" y2="487.10" stroke="#e3e3e3" stroke-width="1"/><line x1="867.10" x2="867.10" y1="481.10" y2="487.10" stroke="#e3e3e3" stroke-width="1"/><line x1="949.70" x2="949.70" y1="481.10" y2="487.10" stroke="#e3e3e3" stroke-width="1"/><line x1="1032.30" x2="1032.30" y1="481.10" y2="487.10" stroke="#e3e3e3" stroke-width="1"/><line x1="1114.90" x2="1114.90" y1="481.10" y2="487.10" stroke="#e3e3e3" stroke-width="1"/><line x1="1197.50" x2="1197.50" y1="481.10" y2="487.10" stroke="#e3e3e3" stroke-width="1"/><line x1="1280.10" x2="1280.10" y1="481.10" y2="487.10" stroke="#e3e3e3" stroke-width="1"/><line x1="1362.70" x2="1362.70" y1="481.10" y2="487.10" stroke="#e3e3e3" stroke-width="1"/><line x1="1445.30" x2="1445.30" y1="481.10" y2="487.10" stroke="#e3e3e3" stroke-width="1"/><line x1="1527.90" x2="1527.90" y1="481.10" y2="487.10" stroke="#e3e3e3" stroke-width="1"/><line x1="1610.50" x2="1610.50" y1="481.10" y2="487.10" stroke="#e3e3e3" stroke-width="1"/><line x1="1693.10" x2="1693.10" y1="481.10" y2="487.10" stroke="#e3e3e3" stroke-width="1"/><line x1="1775.70" x2="1775.70" y1="481.10" y2="487.10" stroke="#e3e3e3" stroke-width="1"/><line x1="1858.30" x2="1858.30" y1="481.10" y2="487.10" stroke="#e3e3e3" stroke-width="1"/><text x="825.80" y="502.9" text-anchor="middle" font-size="11" fill="#1f2326" font-family="Liberation Sans, sans-serif">2024-08</text><text x="908.40" y="502.9" text-anchor="middle" font-size="11" fill="#1f2326" font-family="Liberation Sans, sans-serif">2024-09</text><text x="991.00" y="502.9" text-anchor="middle" font-size="11" fill="#1f2326" font-family="Liberation Sans, sans-serif">2024-10</text><text x="1073.60" y="502.9" text-anchor="middle" font-size="11" fill="#1f2326" font-family="Liberation Sans, sans-serif">2024-11</text><text x="1156.20" y="502.9" text-anchor="middle" font-size="11" fill="#1f2326" font-family="Liberation Sans, sans-serif">2024-12</text><text x="1238.80" y="502.9" text-anchor="middle" font-size="11" fill="#1f2326" font-family="Liberation Sans, sans-serif">2025-01</text><text x="1321.40" y="502.9" text-anchor="middle" font-size="11" fill="#1f2326" font-family="Liberation Sans, sans-serif">2025-02</text><text x="1404.00" y="502.9" text-anchor="middle" font-size="11" fill="#1f2326" font-family="Liberation Sans, sans-serif">2025-03</text><text x="1486.60" y="502.9" text-anchor="middle" font-size="11" fill="#1f2326" font-family="Liberation Sans, sans-serif">2025-04</text><text x="1569.20" y="502.9" text-anchor="middle" font-size="11" fill="#1f2326" font-family="Liberation Sans, sans-serif">2025-05</text><text x="1651.80" y="502.9" text-anchor="middle" font-size="11" fill="#1f2326" font-family="Liberation Sans, sans-serif">2025-06</text><text x="1734.40" y="502.9" text-anchor="middle" font-size="11" fill="#1f2326" font-family="Liberation Sans, sans-serif">2025-07</text><text x="1817.00" y="502.9" text-anchor="middle" font-size="11" fill="#1f2326" font-family="Liberation Sans, sans-serif">2025-08</text><clipPath id="cp1"><rect x="784.5" y="224" width="1073.8" height="257.10"/></clipPath><g clip-path="url(#cp1)"><rect x="796.89" y="480.66" width="57.82" height="0.44" fill="#28a745" fill-opacity=".85"/><rect x="879.49" y="479.79" width="57.82" height="1.31" fill="#28a745" fill-opacity=".85"/><rect x="962.09" y="371.46" width="57.82" height="109.64" fill="#28a745" fill-opacity=".85"/><rect x="1044.69" y="352.70" width="57.82" height="128.40" fill="#28a745" fill-opacity=".85"/><rect x="1127.29" y="301.99" width="57.82" height="179.11" fill="#28a745" fill-opacity=".85"/><rect x="1209.89" y="431.66" width="57.82" height="49.44" fill="#28a745" fill-opacity=".85"/><rect x="1292.49" y="406.07" width="57.82" height="75.03" fill="#28a745" fill-opacity=".85"/><rect x="1375.09" y="472.92" width="57.82" height="8.18" fill="#28a745" fill-opacity=".85"/><rect x="1457.69" y="426.71" width="57.82" height="54.39" fill="#28a745" fill-opacity=".85"/><rect x="1540.29" y="458.29" width="57.82" height="22.81" fill="#28a745" fill-opacity=".85"/><rect x="1622.89" y="457.20" width="57.82" height="23.90" fill="#28a745" fill-opacity=".85"/><rect x="1705.49" y="466.41" width="57.82" height="14.69" fill="#28a745" fill-opacity=".85"/><rect x="1788.09" y="475.84" width="57.82" height="5.26" fill="#28a745" fill-opacity=".85"/><text x="991.00" y="383.36" text-anchor="middle" font-size="11" font-weight="700" fill="#fff" font-family="Liberation Sans, sans-serif">2503.23</text><text x="1073.60" y="364.60" text-anchor="middle" font-size="11" font-weight="700" fill="#fff" font-family="Liberation Sans, sans-serif">2931.53</text><text x="1156.20" y="313.89" text-anchor="middle" font-size="11" font-weight="700" fill="#fff" font-family="Liberation Sans, sans-serif">4089.3</text><text x="1238.80" y="443.56" text-anchor="middle" font-size="11" font-weight="700" fill="#fff" font-family="Liberation Sans, sans-serif">1128.7</text><text x="1321.40" y="417.97" text-anchor="middle" font-size="11" font-weight="700" fill="#fff" font-family="Liberation Sans, sans-serif">1712.94</text><text x="1404.00" y="484.82" text-anchor="middle" font-size="11" font-weight="700" fill="#fff" font-family="Liberation Sans, sans-serif">186.72</text><text x="1486.60" y="438.61" text-anchor="middle" font-size="11" font-weight="700" fill="#fff" font-family="Liberation Sans, sans-serif">1241.87</text><text x="1569.20" y="470.19" text-anchor="middle" font-size="11" font-weight="700" fill="#fff" font-family="Liberation Sans, sans-serif">520.7</text><text x="1651.80" y="469.10" text-anchor="middle" font-size="11" font-weight="700" fill="#fff" font-family="Liberation Sans, sans-serif">545.55</text><text x="1734.40" y="478.31" text-anchor="middle" font-size="11" font-weight="700" fill="#fff" font-family="Liberation Sans, sans-serif">335.33</text></g><line x1="1864.3" x2="1878.4" y1="241.90" y2="241.90" stroke="#6e8192" stroke-width="1.15"/><line x1="1864.3" x2="1878.4" y1="245.70" y2="245.70" stroke="#6e8192" stroke-width="1.15"/><line x1="1864.3" x2="1878.4" y1="249.50" y2="249.50" stroke="#6e8192" stroke-width="1.15"/></svg>
<div class="b " style="left:713px;top:586px;width:1185px;height:314.5px;background:#fff;border-radius:11px"></div>
<svg class="b" style="left:713px;top:586px" width="1185" height="315" viewBox="713 586 1185 315"><line x1="784.5" x2="1858.3" y1="821.50" y2="821.50" stroke="#e3e3e3" stroke-width="1"/><text x="775.6" y="824.70" text-anchor="end" font-size="10" fill="#1f2326" font-family="Liberation Sans, sans-serif">0.00</text><line x1="784.5" x2="1858.3" y1="782.00" y2="782.00" stroke="#e3e3e3" stroke-width="1"/><text x="775.6" y="785.20" text-anchor="end" font-size="10" fill="#1f2326" font-family="Liberation Sans, sans-serif">1000.00</text><line x1="784.5" x2="1858.3" y1="742.50" y2="742.50" stroke="#e3e3e3" stroke-width="1"/><text x="775.6" y="745.70" text-anchor="end" font-size="10" fill="#1f2326" font-family="Liberation Sans, sans-serif">2000.00</text><line x1="784.5" x2="1858.3" y1="703.00" y2="703.00" stroke="#e3e3e3" stroke-width="1"/><text x="775.6" y="706.20" text-anchor="end" font-size="10" fill="#1f2326" font-family="Liberation Sans, sans-serif">3000.00</text><line x1="784.5" x2="1858.3" y1="663.50" y2="663.50" stroke="#e3e3e3" stroke-width="1"/><text x="775.6" y="666.70" text-anchor="end" font-size="10" fill="#1f2326" font-family="Liberation Sans, sans-serif">4000.00</text><line x1="784.5" x2="1858.3" y1="624.00" y2="624.00" stroke="#e3e3e3" stroke-width="1"/><text x="775.6" y="627.20" text-anchor="end" font-size="10" fill="#1f2326" font-family="Liberation Sans, sans-serif">5000.00</text><line x1="784.50" x2="784.50" y1="821.50" y2="827.50" stroke="#e3e3e3" stroke-width="1"/><line x1="867.10" x2="867.10" y1="821.50" y2="827.50" stroke="#e3e3e3" stroke-width="1"/><line x1="949.70" x2="949.70" y1="821.50" y2="827.50" stroke="#e3e3e3" stroke-width="1"/><line x1="1032.30" x2="1032.30" y1="821.50" y2="827.50" stroke="#e3e3e3" stroke-width="1"/><line x1="1114.90" x2="1114.90" y1="821.50" y2="827.50" stroke="#e3e3e3" stroke-width="1"/><line x1="1197.50" x2="1197.50" y1="821.50" y2="827.50" stroke="#e3e3e3" stroke-width="1"/><line x1="1280.10" x2="1280.10" y1="821.50" y2="827.50" stroke="#e3e3e3" stroke-width="1"/><line x1="1362.70" x2="1362.70" y1="821.50" y2="827.50" stroke="#e3e3e3" stroke-width="1"/><line x1="1445.30" x2="1445.30" y1="821.50" y2="827.50" stroke="#e3e3e3" stroke-width="1"/><line x1="1527.90" x2="1527.90" y1="821.50" y2="827.50" stroke="#e3e3e3" stroke-width="1"/><line x1="1610.50" x2="1610.50" y1="821.50" y2="827.50" stroke="#e3e3e3" stroke-width="1"/><line x1="1693.10" x2="1693.10" y1="821.50" y2="827.50" stroke="#e3e3e3" stroke-width="1"/><line x1="1775.70" x2="1775.70" y1="821.50" y2="827.50" stroke="#e3e3e3" stroke-width="1"/><line x1="1858.30" x2="1858.30" y1="821.50" y2="827.50" stroke="#e3e3e3" stroke-width="1"/><text x="825.80" y="842.8" text-anchor="middle" font-size="11" fill="#1f2326" font-family="Liberation Sans, sans-serif">2024-08</text><text x="908.40" y="842.8" text-anchor="middle" font-size="11" fill="#1f2326" font-family="Liberation Sans, sans-serif">2024-09</text><text x="991.00" y="842.8" text-anchor="middle" font-size="11" fill="#1f2326" font-family="Liberation Sans, sans-serif">2024-10</text><text x="1073.60" y="842.8" text-anchor="middle" font-size="11" fill="#1f2326" font-family="Liberation Sans, sans-serif">2024-11</text><text x="1156.20" y="842.8" text-anchor="middle" font-size="11" fill="#1f2326" font-family="Liberation Sans, sans-serif">2024-12</text><text x="1238.80" y="842.8" text-anchor="middle" font-size="11" fill="#1f2326" font-family="Liberation Sans, sans-serif">2025-01</text><text x="1321.40" y="842.8" text-anchor="middle" font-size="11" fill="#1f2326" font-family="Liberation Sans, sans-serif">2025-02</text><text x="1404.00" y="842.8" text-anchor="middle" font-size="11" fill="#1f2326" font-family="Liberation Sans, sans-serif">2025-03</text><text x="1486.60" y="842.8" text-anchor="middle" font-size="11" fill="#1f2326" font-family="Liberation Sans, sans-serif">2025-04</text><text x="1569.20" y="842.8" text-anchor="middle" font-size="11" fill="#1f2326" font-family="Liberation Sans, sans-serif">2025-05</text><text x="1651.80" y="842.8" text-anchor="middle" font-size="11" fill="#1f2326" font-family="Liberation Sans, sans-serif">2025-06</text><text x="1734.40" y="842.8" text-anchor="middle" font-size="11" fill="#1f2326" font-family="Liberation Sans, sans-serif">2025-07</text><text x="1817.00" y="842.8" text-anchor="middle" font-size="11" fill="#1f2326" font-family="Liberation Sans, sans-serif">2025-08</text><clipPath id="cp2"><rect x="784.5" y="586" width="1073.8" height="235.50"/></clipPath><g clip-path="url(#cp2)"><rect x="796.89" y="820.95" width="57.82" height="0.55" fill="#1a73e8" fill-opacity=".85"/><rect x="879.49" y="820.08" width="57.82" height="1.42" fill="#28a745" fill-opacity=".85"/><rect x="962.09" y="720.51" width="57.82" height="100.99" fill="#28a745" fill-opacity=".85"/><rect x="962.09" y="707.37" width="57.82" height="13.14" fill="#1a73e8" fill-opacity=".85"/><rect x="1044.69" y="703.24" width="57.82" height="118.26" fill="#28a745" fill-opacity=".85"/><rect x="1127.29" y="633.83" width="57.82" height="187.67" fill="#28a745" fill-opacity=".85"/><rect x="1127.29" y="632.25" width="57.82" height="1.58" fill="#1a73e8" fill-opacity=".85"/><rect x="1127.29" y="624.59" width="57.82" height="7.66" fill="#ff9f1a" fill-opacity=".85"/><rect x="1209.89" y="772.38" width="57.82" height="49.12" fill="#28a745" fill-opacity=".85"/><rect x="1209.89" y="765.98" width="57.82" height="6.40" fill="#1a73e8" fill-opacity=".85"/><rect x="1292.49" y="748.73" width="57.82" height="72.77" fill="#28a745" fill-opacity=".85"/><rect x="1292.49" y="746.52" width="57.82" height="2.21" fill="#1a73e8" fill-opacity=".85"/><rect x="1375.09" y="813.71" width="57.82" height="7.79" fill="#28a745" fill-opacity=".85"/><rect x="1375.09" y="813.32" width="57.82" height="0.39" fill="#17a2b8" fill-opacity=".85"/><rect x="1457.69" y="769.10" width="57.82" height="52.40" fill="#28a745" fill-opacity=".85"/><rect x="1457.69" y="768.00" width="57.82" height="1.11" fill="#dc3545" fill-opacity=".85"/><rect x="1457.69" y="766.57" width="57.82" height="1.42" fill="#6610f2" fill-opacity=".85"/><rect x="1457.69" y="765.55" width="57.82" height="1.03" fill="#6f42c1" fill-opacity=".85"/><rect x="1457.69" y="764.60" width="57.82" height="0.95" fill="#ffc107" fill-opacity=".85"/><rect x="1540.29" y="799.97" width="57.82" height="21.53" fill="#28a745" fill-opacity=".85"/><rect x="1540.29" y="798.16" width="57.82" height="1.82" fill="#dc3545" fill-opacity=".85"/><rect x="1540.29" y="796.58" width="57.82" height="1.58" fill="#6f42c1" fill-opacity=".85"/><rect x="1540.29" y="795.39" width="57.82" height="1.18" fill="#ffc107" fill-opacity=".85"/><rect x="1540.29" y="794.44" width="57.82" height="0.95" fill="#20c997" fill-opacity=".85"/><rect x="1540.29" y="792.23" width="57.82" height="2.21" fill="#007bff" fill-opacity=".85"/><rect x="1622.89" y="797.27" width="57.82" height="24.23" fill="#28a745" fill-opacity=".85"/><rect x="1622.89" y="795.93" width="57.82" height="1.34" fill="#dc3545" fill-opacity=".85"/><rect x="1622.89" y="794.19" width="57.82" height="1.74" fill="#6f42c1" fill-opacity=".85"/><rect x="1622.89" y="793.32" width="57.82" height="0.87" fill="#ffc107" fill-opacity=".85"/><rect x="1622.89" y="792.69" width="57.82" height="0.63" fill="#17a2b8" fill-opacity=".85"/><rect x="1622.89" y="791.11" width="57.82" height="1.58" fill="#007bff" fill-opacity=".85"/><rect x="1705.49" y="808.21" width="57.82" height="13.29" fill="#28a745" fill-opacity=".85"/><rect x="1705.49" y="807.74" width="57.82" height="0.47" fill="#17a2b8" fill-opacity=".85"/><rect x="1705.49" y="805.29" width="57.82" height="2.45" fill="#6610f2" fill-opacity=".85"/><rect x="1705.49" y="804.18" width="57.82" height="1.11" fill="#ffc107" fill-opacity=".85"/><rect x="1788.09" y="817.08" width="57.82" height="4.42" fill="#28a745" fill-opacity=".85"/><rect x="1788.09" y="814.00" width="57.82" height="3.08" fill="#6610f2" fill-opacity=".85"/><text x="991.00" y="733.41" text-anchor="middle" font-size="11" font-weight="700" fill="#fff" font-family="Liberation Sans, sans-serif">2556.63</text><text x="991.00" y="718.67" text-anchor="middle" font-size="11" font-weight="700" fill="#fff" font-family="Liberation Sans, sans-serif">332.62</text><text x="1073.60" y="715.14" text-anchor="middle" font-size="11" font-weight="700" fill="#fff" font-family="Liberation Sans, sans-serif">2994.05</text><text x="1156.20" y="645.73" text-anchor="middle" font-size="11" font-weight="700" fill="#fff" font-family="Liberation Sans, sans-serif">4751.05</text><text x="1238.80" y="784.28" text-anchor="middle" font-size="11" font-weight="700" fill="#fff" font-family="Liberation Sans, sans-serif">1243.54</text><text x="1321.40" y="760.63" text-anchor="middle" font-size="11" font-weight="700" fill="#fff" font-family="Liberation Sans, sans-serif">1842.34</text><text x="1404.00" y="825.61" text-anchor="middle" font-size="11" font-weight="700" fill="#fff" font-family="Liberation Sans, sans-serif">197.09</text><text x="1486.60" y="781.00" text-anchor="middle" font-size="11" font-weight="700" fill="#fff" font-family="Liberation Sans, sans-serif">1326.54</text><text x="1569.20" y="811.87" text-anchor="middle" font-size="11" font-weight="700" fill="#fff" font-family="Liberation Sans, sans-serif">544.94</text><text x="1651.80" y="809.17" text-anchor="middle" font-size="11" font-weight="700" fill="#fff" font-family="Liberation Sans, sans-serif">613.34</text><text x="1734.40" y="820.11" text-anchor="middle" font-size="11" font-weight="700" fill="#fff" font-family="Liberation Sans, sans-serif">336.48</text></g><line x1="1864.3" x2="1878.4" y1="603.80" y2="603.80" stroke="#6e8192" stroke-width="1.15"/><line x1="1864.3" x2="1878.4" y1="607.60" y2="607.60" stroke="#6e8192" stroke-width="1.15"/><line x1="1864.3" x2="1878.4" y1="611.40" y2="611.40" stroke="#6e8192" stroke-width="1.15"/><rect x="781.9" y="858.9" width="10.3" height="10.3" rx="1.6" fill="#28a745"/><text x="794.9" y="867.8" font-size="11" fill="#1f2326" textLength="49.1" lengthAdjust="spacing" font-family="Liberation Sans, sans-serif">Comercial</text><rect x="854.9" y="858.9" width="10.3" height="10.3" rx="1.6" fill="#1a73e8"/><text x="867.8000000000001" y="867.8" font-size="11" fill="#1f2326" textLength="38.4" lengthAdjust="spacing" font-family="Liberation Sans, sans-serif">Suporte</text><rect x="916.7" y="858.9" width="10.3" height="10.3" rx="1.6" fill="#ff9f1a"/><text x="929.9" y="867.8" font-size="11" fill="#1f2326" textLength="65.7" lengthAdjust="spacing" font-family="Liberation Sans, sans-serif">setor de teste</text><rect x="1005.8" y="858.9" width="10.3" height="10.3" rx="1.6" fill="#dc3545"/><text x="1019.2" y="867.8" font-size="11" fill="#1f2326" textLength="42.2" lengthAdjust="spacing" font-family="Liberation Sans, sans-serif">Serviços</text><rect x="1072" y="858.9" width="10.3" height="10.3" rx="1.6" fill="#6610f2"/><text x="1085.1999999999998" y="867.8" font-size="11" fill="#1f2326" textLength="51.1" lengthAdjust="spacing" font-family="Liberation Sans, sans-serif">Financeiro</text><rect x="1146.8" y="858.9" width="10.3" height="10.3" rx="1.6" fill="#fd7e14"/><text x="1160.1" y="867.8" font-size="11" fill="#1f2326" textLength="29.7" lengthAdjust="spacing" font-family="Liberation Sans, sans-serif">Social</text><rect x="1200" y="858.9" width="10.3" height="10.3" rx="1.6" fill="#20c997"/><text x="1213.1999999999998" y="867.8" font-size="11" fill="#1f2326" textLength="59.9" lengthAdjust="spacing" font-family="Liberation Sans, sans-serif">Teste Hablla</text><rect x="1284" y="858.9" width="10.3" height="10.3" rx="1.6" fill="#6f42c1"/><text x="1297.3" y="867.8" font-size="11" fill="#1f2326" textLength="83.2" lengthAdjust="spacing" font-family="Liberation Sans, sans-serif">Desenvolvimento</text><rect x="1391" y="858.9" width="10.3" height="10.3" rx="1.6" fill="#17a2b8"/><text x="1404.3" y="867.8" font-size="11" fill="#1f2326" textLength="93.2" lengthAdjust="spacing" font-family="Liberation Sans, sans-serif">Sucesso do Cliente</text><rect x="1507.8" y="858.9" width="10.3" height="10.3" rx="1.6" fill="#ffc107"/><text x="1521.3" y="867.8" font-size="11" fill="#1f2326" textLength="144.2" lengthAdjust="spacing" font-family="Liberation Sans, sans-serif">Implementação &amp; Onboarding</text><rect x="1676" y="858.9" width="10.3" height="10.3" rx="1.6" fill="#007bff"/><text x="1689.1999999999998" y="867.8" font-size="11" fill="#1f2326" textLength="143.6" lengthAdjust="spacing" font-family="Liberation Sans, sans-serif">Supervisão Suporte e Serviço</text></svg>
</main>
</body></html>
